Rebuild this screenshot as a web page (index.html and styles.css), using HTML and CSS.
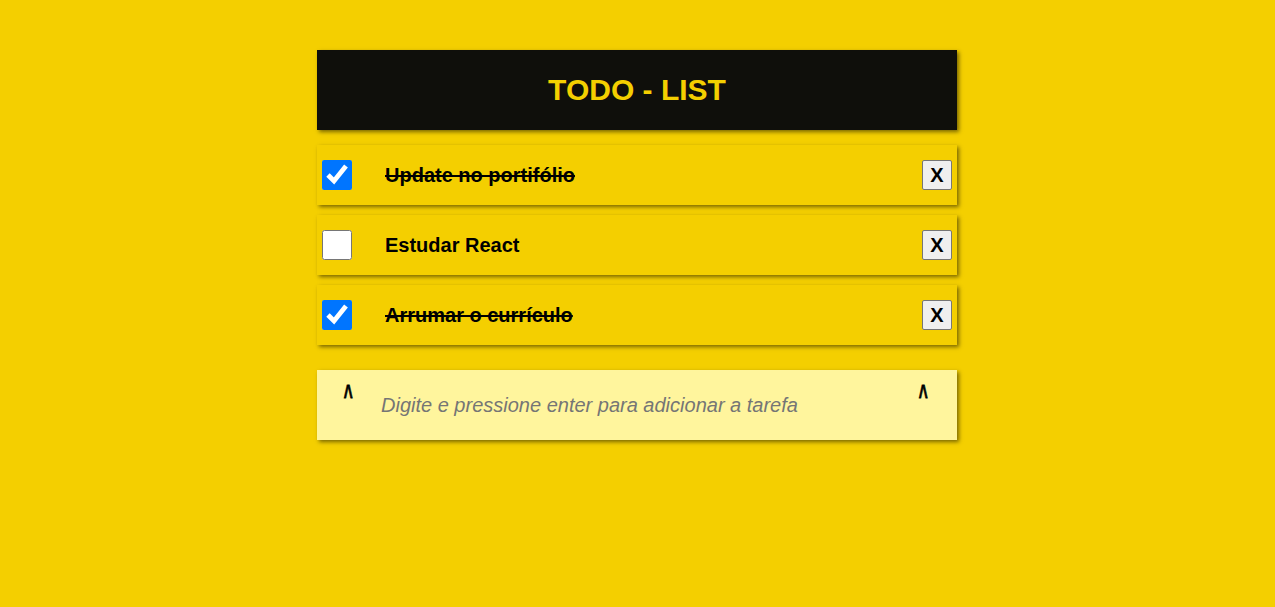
FILE: index.html
```html
<!DOCTYPE html>
<html lang="pt-BR">
<head>
<meta charset="utf-8">
<title>Todo List</title>
<link rel="stylesheet" href="styles.css">
</head>
<body>
<main class="app">
  <header class="header"><h1 class="title">TODO - LIST</h1></header>
  <ul class="list">
    <li class="item">
      <input class="check" type="checkbox" checked>
      <span class="label done">Update no portifólio</span>
      <button class="remove">X</button>
    </li>
    <li class="item">
      <input class="check" type="checkbox">
      <span class="label">Estudar React</span>
      <button class="remove">X</button>
    </li>
    <li class="item">
      <input class="check" type="checkbox" checked>
      <span class="label done">Arrumar o currículo</span>
      <button class="remove">X</button>
    </li>
  </ul>
  <div class="new">
    <span class="caret">^</span>
    <input class="new-input" type="text" placeholder="Digite e pressione enter para adicionar a tarefa">
    <span class="caret">^</span>
  </div>
</main>
</body>
</html>
```

FILE: styles.css
```css
html, body {
  margin: 0;
  padding: 0;
}
body {
  background: #f4cf00;
  font-family: "Liberation Sans", Arial, sans-serif;
  min-height: 607px;
  padding-right: 1px;
}
.app {
  width: 640px;
  margin: 50px auto 0;
}
.header {
  height: 80px;
  background: #0f0f0b;
  display: flex;
  align-items: center;
  justify-content: center;
  box-shadow: 2px 2px 4px rgba(0, 0, 0, 0.5);
}
.title {
  margin: 0;
  color: #f4cf00;
  font-size: 30px;
  font-weight: bold;
}
.list {
  list-style: none;
  margin: 15px 0 0;
  padding: 0;
  display: flex;
  flex-direction: column;
  gap: 10px;
}
.item {
  height: 60px;
  display: flex;
  align-items: center;
  padding: 0 5px;
  background: #f4cf00;
  box-shadow: 2px 2px 4px rgba(0, 0, 0, 0.5);
}
.check {
  width: 30px;
  height: 30px;
  margin: 0;
  flex: none;
}
.label {
  flex: 1;
  margin-left: 33px;
  font-size: 20px;
  font-weight: bold;
  color: #000;
}
.done {
  text-decoration: line-through;
}
.remove {
  width: 30px;
  height: 30px;
  padding: 0;
  font-family: "Liberation Sans", Arial, sans-serif;
  font-size: 20px;
  font-weight: bold;
  color: #000;
  background: #efefef;
  border: 1px solid #767676;
  border-radius: 2px;
}
.new {
  margin-top: 25px;
  height: 70px;
  display: flex;
  align-items: center;
  padding: 0 29px 0 26px;
  background: #fff59d;
  box-shadow: 2px 2px 4px rgba(0, 0, 0, 0.5);
  box-sizing: border-box;
}
.caret {
  align-self: flex-start;
  width: 10px;
  margin-top: 11px;
  font-size: 18px;
  font-weight: bold;
  line-height: 18px;
  text-align: center;
  color: #000;
  -webkit-text-stroke: 0.6px #000;
  transform: scale(0.85, 1.6);
  transform-origin: 50% 0;
}
.new-input {
  flex: 1;
  margin-left: 28px;
  border: none;
  outline: none;
  background: transparent;
  font-family: "Liberation Sans", Arial, sans-serif;
  font-size: 20px;
  font-style: italic;
  padding: 0;
  color: #000;
}
.new-input::placeholder {
  color: #757575;
  font-style: italic;
}
```
